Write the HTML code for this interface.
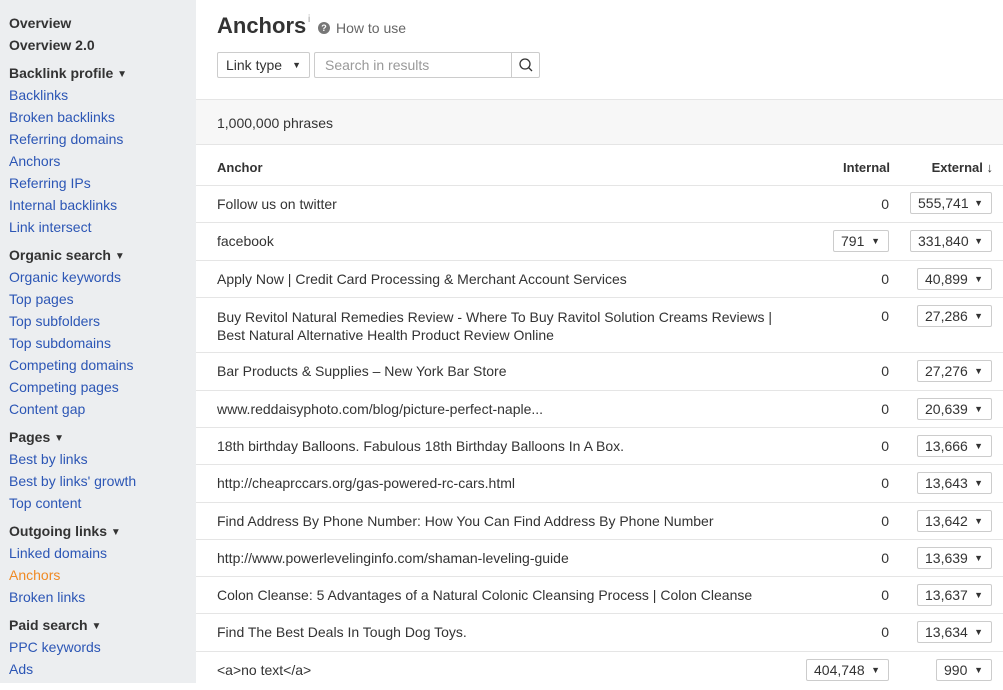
<!DOCTYPE html>
<html><head><meta charset="utf-8"><style>
*{margin:0;padding:0;box-sizing:border-box}
body{width:1003px;height:683px;overflow:hidden;font-family:"Liberation Sans",Arial,sans-serif;font-size:14px;color:#333;background:#fff;position:relative}
#side{position:absolute;left:0;top:0;width:196px;height:683px;background:#eceef0}
#side div{position:absolute;left:9px;white-space:nowrap;line-height:18px}
#side .h{font-weight:bold;color:#333}
#side .l{color:#2c56b5}
#side .a{color:#f08a24}
.tri{font-size:10px;vertical-align:1px}
#main{position:absolute;left:196px;top:0;right:0;height:683px}
.abs{position:absolute;white-space:nowrap}
.row{position:absolute;left:0;right:0;border-bottom:1px solid #e5e5e5}
.dd{position:absolute;height:22px;border:1px solid #ccc;border-radius:2px;background:#fff;font-size:14px;line-height:20px;padding-left:7px;right:11px}
.dd:after{content:"▼";position:absolute;right:8px;font-size:9px;top:0}
.z{position:absolute;right:114px}
</style></head><body>
<div id="side">
<div class="h" style="top:14px">Overview</div>
<div class="h" style="top:36px">Overview 2.0</div>
<div class="h" style="top:64px">Backlink profile <span class="tri">▼</span></div>
<div class="l" style="top:86px">Backlinks</div>
<div class="l" style="top:108px">Broken backlinks</div>
<div class="l" style="top:130px">Referring domains</div>
<div class="l" style="top:152px">Anchors</div>
<div class="l" style="top:174px">Referring IPs</div>
<div class="l" style="top:196px">Internal backlinks</div>
<div class="l" style="top:218px">Link intersect</div>
<div class="h" style="top:246px">Organic search <span class="tri">▼</span></div>
<div class="l" style="top:268px">Organic keywords</div>
<div class="l" style="top:290px">Top pages</div>
<div class="l" style="top:312px">Top subfolders</div>
<div class="l" style="top:334px">Top subdomains</div>
<div class="l" style="top:356px">Competing domains</div>
<div class="l" style="top:378px">Competing pages</div>
<div class="l" style="top:400px">Content gap</div>
<div class="h" style="top:428px">Pages <span class="tri">▼</span></div>
<div class="l" style="top:450px">Best by links</div>
<div class="l" style="top:472px">Best by links' growth</div>
<div class="l" style="top:494px">Top content</div>
<div class="h" style="top:522px">Outgoing links <span class="tri">▼</span></div>
<div class="l" style="top:544px">Linked domains</div>
<div class="a" style="top:566px">Anchors</div>
<div class="l" style="top:588px">Broken links</div>
<div class="h" style="top:616px">Paid search <span class="tri">▼</span></div>
<div class="l" style="top:638px">PPC keywords</div>
<div class="l" style="top:660px">Ads</div>
</div>
<div id="main">
<div class="abs" style="left:21px;top:13px;font-size:22px;font-weight:bold;color:#333">Anchors</div>
<div class="abs" style="left:112px;top:14px;font-size:10px;color:#999">i</div>
<div class="abs" style="left:122px;top:22px;width:12px;height:12px;border-radius:50%;background:#777;color:#fff;font-size:9px;font-weight:bold;text-align:center;line-height:12px">?</div>
<div class="abs" style="left:140px;top:20px;font-size:14px;color:#666">How to use</div>
<div class="abs" style="left:21px;top:52px;width:93px;height:26px;border:1px solid #ccc;border-radius:2px;line-height:24px;padding-left:8px;color:#333">Link type <span style="font-size:9px;position:absolute;right:8px">▼</span></div>
<div class="abs" style="left:118px;top:52px;width:226px;height:26px;border:1px solid #ccc;border-radius:2px;line-height:24px;padding-left:10px;color:#999">Search in results
<div style="position:absolute;right:0;top:0;width:28px;height:24px;border-left:1px solid #ccc"><svg width="28" height="24"><circle cx="13" cy="11" r="5" fill="none" stroke="#333" stroke-width="1.3"/><line x1="16.5" y1="14.5" x2="20" y2="18" stroke="#333" stroke-width="1.3"/></svg></div></div>
<div class="row" style="top:99px;height:46px;background:#f7f7f7;border-top:1px solid #e5e5e5"><span class="abs" style="left:21px;top:15px">1,000,000 phrases</span></div>
<div class="row" style="top:145px;height:41px;font-weight:bold;font-size:13px"><span class="abs" style="left:21px;top:15px">Anchor</span><span class="abs" style="right:113px;top:15px">Internal</span><span class="abs" style="right:10px;top:15px">External ↓</span></div>

<div class="row" style="top:186px;height:37px"><span class="abs" style="left:21px;top:10px">Follow us on twitter</span><span class="z" style="top:10px">0</span><div class="dd" style="top:6px;width:82px">555,741</div></div>
<div class="row" style="top:223px;height:38px"><span class="abs" style="left:21px;top:10px">facebook</span><div class="dd" style="top:7px;width:56px;right:114px">791</div><div class="dd" style="top:7px;width:82px">331,840</div></div>
<div class="row" style="top:261px;height:37px"><span class="abs" style="left:21px;top:10px">Apply Now | Credit Card Processing &amp; Merchant Account Services</span><span class="z" style="top:10px">0</span><div class="dd" style="top:7px;width:75px">40,899</div></div>
<div class="row" style="top:298px;height:55px"><span class="abs" style="left:21px;top:10px;line-height:18px">Buy Revitol Natural Remedies Review - Where To Buy Ravitol Solution Creams Reviews |<br>Best Natural Alternative Health Product Review Online</span><span class="z" style="top:10px">0</span><div class="dd" style="top:7px;width:75px">27,286</div></div>
<div class="row" style="top:353px;height:38px"><span class="abs" style="left:21px;top:10px">Bar Products &amp; Supplies – New York Bar Store</span><span class="z" style="top:10px">0</span><div class="dd" style="top:7px;width:75px">27,276</div></div>
<div class="row" style="top:391px;height:37px"><span class="abs" style="left:21px;top:10px">www.reddaisyphoto.com/blog/picture-perfect-naple...</span><span class="z" style="top:10px">0</span><div class="dd" style="top:7px;width:75px">20,639</div></div>
<div class="row" style="top:428px;height:37px"><span class="abs" style="left:21px;top:10px">18th birthday Balloons. Fabulous 18th Birthday Balloons In A Box.</span><span class="z" style="top:10px">0</span><div class="dd" style="top:7px;width:75px">13,666</div></div>
<div class="row" style="top:465px;height:38px"><span class="abs" style="left:21px;top:10px">http://cheaprccars.org/gas-powered-rc-cars.html</span><span class="z" style="top:10px">0</span><div class="dd" style="top:7px;width:75px">13,643</div></div>
<div class="row" style="top:503px;height:37px"><span class="abs" style="left:21px;top:10px">Find Address By Phone Number: How You Can Find Address By Phone Number</span><span class="z" style="top:10px">0</span><div class="dd" style="top:7px;width:75px">13,642</div></div>
<div class="row" style="top:540px;height:37px"><span class="abs" style="left:21px;top:10px">http://www.powerlevelinginfo.com/shaman-leveling-guide</span><span class="z" style="top:10px">0</span><div class="dd" style="top:7px;width:75px">13,639</div></div>
<div class="row" style="top:577px;height:37px"><span class="abs" style="left:21px;top:10px">Colon Cleanse: 5 Advantages of a Natural Colonic Cleansing Process | Colon Cleanse</span><span class="z" style="top:10px">0</span><div class="dd" style="top:7px;width:75px">13,637</div></div>
<div class="row" style="top:614px;height:38px"><span class="abs" style="left:21px;top:10px">Find The Best Deals In Tough Dog Toys.</span><span class="z" style="top:10px">0</span><div class="dd" style="top:7px;width:75px">13,634</div></div>
<div class="row" style="top:652px;height:38px;border:none"><span class="abs" style="left:21px;top:10px">&lt;a&gt;no text&lt;/a&gt;</span><div class="dd" style="top:7px;width:83px;right:114px">404,748</div><div class="dd" style="top:7px;width:56px">990</div></div>
</div>
</body></html>
